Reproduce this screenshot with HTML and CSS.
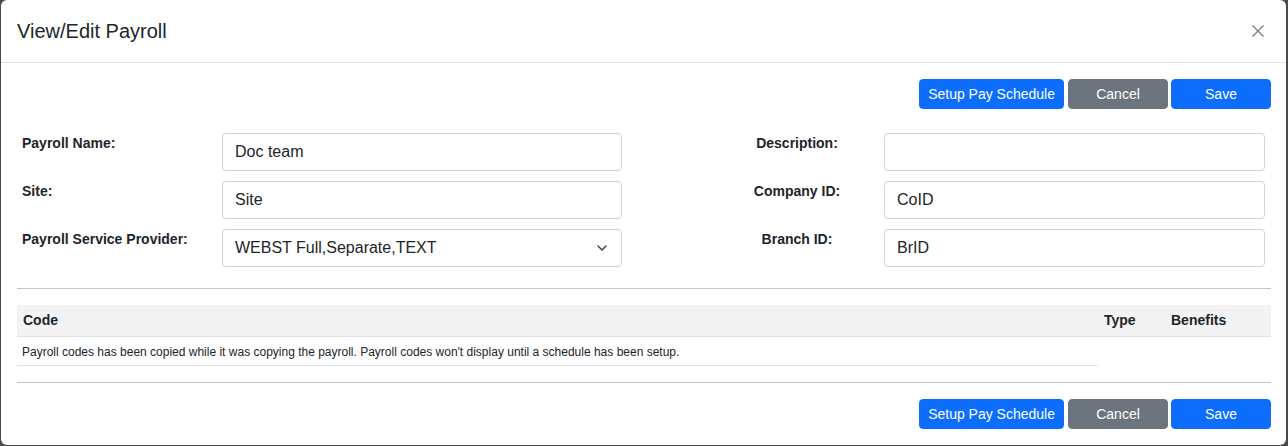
FILE: index.html
```html
<!DOCTYPE html>
<html lang="en">
<head>
<meta charset="utf-8">
<title>View/Edit Payroll</title>
<link rel="stylesheet" href="styles.css">
</head>
<body>
<div class="modal">
  <div class="modal-header">
    <h5 class="modal-title">View/Edit Payroll</h5>
    <button class="btn-close" type="button" aria-label="Close">
      <svg width="12" height="12" viewBox="0 0 12 12"><path d="M0.5 0.5 L11.5 11.5 M11.5 0.5 L0.5 11.5" stroke="#7a7a7a" stroke-width="1.3" fill="none"/></svg>
    </button>
  </div>
  <div class="modal-body">
    <div class="actions">
      <button class="btn btn-primary" type="button">Setup Pay Schedule</button>
      <button class="btn btn-secondary btn-fixed" type="button">Cancel</button>
      <button class="btn btn-primary btn-fixed btn-last" type="button">Save</button>
    </div>

    <div class="form-grid">
      <label class="lbl">Payroll Name:</label>
      <input class="form-control" type="text" value="Doc team">
      <span class="spacer"></span>
      <label class="lbl lbl-center">Description:</label>
      <input class="form-control" type="text" value="">

      <label class="lbl">Site:</label>
      <input class="form-control" type="text" value="Site">
      <span class="spacer"></span>
      <label class="lbl lbl-center">Company ID:</label>
      <input class="form-control" type="text" value="CoID">

      <label class="lbl">Payroll Service Provider:</label>
      <div class="form-select">
        <span>WEBST Full,Separate,TEXT</span>
        <svg width="10" height="6" viewBox="0 0 10 6"><polyline points="1,1 5,5 9,1" fill="none" stroke="#343a40" stroke-width="1.4" stroke-linecap="round" stroke-linejoin="round"/></svg>
      </div>
      <span class="spacer"></span>
      <label class="lbl lbl-center">Branch ID:</label>
      <input class="form-control" type="text" value="BrID">
    </div>

    <hr class="divider divider-top">

    <table class="codes">
      <colgroup>
        <col class="col-code">
        <col class="col-type">
        <col class="col-benefits">
      </colgroup>
      <thead>
        <tr><th>Code</th><th>Type</th><th>Benefits</th></tr>
      </thead>
      <tbody>
        <tr><td class="msg">Payroll codes has been copied while it was copying the payroll. Payroll codes won't display until a schedule has been setup.</td></tr>
      </tbody>
    </table>

    <hr class="divider">

    <div class="actions actions-bottom">
      <button class="btn btn-primary" type="button">Setup Pay Schedule</button>
      <button class="btn btn-secondary btn-fixed" type="button">Cancel</button>
      <button class="btn btn-primary btn-fixed btn-last" type="button">Save</button>
    </div>
  </div>
</div>
</body>
</html>
```

FILE: styles.css
```css
* { box-sizing: border-box; }

html, body {
  margin: 0;
  padding: 0;
}

body {
  background: #4a4a4a;
  font-family: "Liberation Sans", Arial, sans-serif;
  color: #212529;
  width: 1288px;
  height: 446px;
  overflow: hidden;
}

.modal {
  margin-left: 1px;
  width: 1285px;
  height: 445px;
  background: #fff;
  border-radius: 6px;
  display: flex;
  flex-direction: column;
}

.modal-header {
  display: flex;
  align-items: center;
  justify-content: space-between;
  padding: 16px 15px 16px 16px;
  border-bottom: 1px solid #dee2e6;
}

.modal-title {
  margin: 0;
  font-size: 20px;
  font-weight: 400;
  line-height: 30px;
  color: #212529;
}

.btn-close {
  border: 0;
  background: transparent;
  padding: 0;
  width: 12px;
  height: 12px;
  margin-right: 7px;
  display: flex;
}

.modal-body {
  padding: 16px 15px 15px 16px;
}

.actions {
  display: flex;
  justify-content: flex-end;
  margin-bottom: 24px;
}

.actions-bottom {
  margin-bottom: 0;
}

.btn {
  font-family: "Liberation Sans", Arial, sans-serif;
  font-size: 14px;
  line-height: 20px;
  padding: 4px 8px;
  border: 1px solid transparent;
  border-radius: 4px;
  color: #fff;
  height: 30px;
  margin-left: 4px;
}

.btn-last { margin-left: 3px; }

.btn-primary {
  background: #0d6efd;
  border-color: #0d6efd;
}

.btn-secondary {
  background: #6c757d;
  border-color: #6c757d;
}

.btn-fixed {
  width: 100px;
}

.form-grid {
  display: grid;
  grid-template-columns: 205px 400px 88px 174px 381px;
  row-gap: 10px;
}

.lbl {
  font-size: 14px;
  font-weight: 700;
  line-height: 20px;
  padding-left: 5px;
  color: #212529;
}

.lbl-center {
  text-align: center;
  padding-left: 0;
}

.form-control,
.form-select {
  height: 38px;
  border: 1px solid #ced4da;
  border-radius: 4px;
  padding: 6px 12px;
  font-family: "Liberation Sans", Arial, sans-serif;
  font-size: 16px;
  line-height: 24px;
  color: #212529;
  background: #fff;
  width: 100%;
  margin: 0;
}

.form-select {
  display: flex;
  align-items: center;
  justify-content: space-between;
  padding-right: 14px;
}

.divider {
  border: 0;
  border-top: 1px solid #c4c4c4;
  margin: 16px 0;
}

.divider-top {
  margin-top: 21px;
}

.codes {
  width: 100%;
  border-collapse: collapse;
  table-layout: fixed;
}

.col-code { width: 1081px; }
.col-type { width: 67px; }
.col-benefits { width: 106px; }

.codes th {
  background: #f3f3f3;
  text-align: left;
  font-size: 14px;
  font-weight: 700;
  line-height: 20px;
  padding: 5px 6px 6px;
  border-bottom: 1px solid #dee2e6;
  color: #212529;
}

.codes td.msg {
  font-size: 12px;
  line-height: 18px;
  padding: 6px 5px 4px;
  border-bottom: 1px solid #dee2e6;
  color: #212529;
}
```
